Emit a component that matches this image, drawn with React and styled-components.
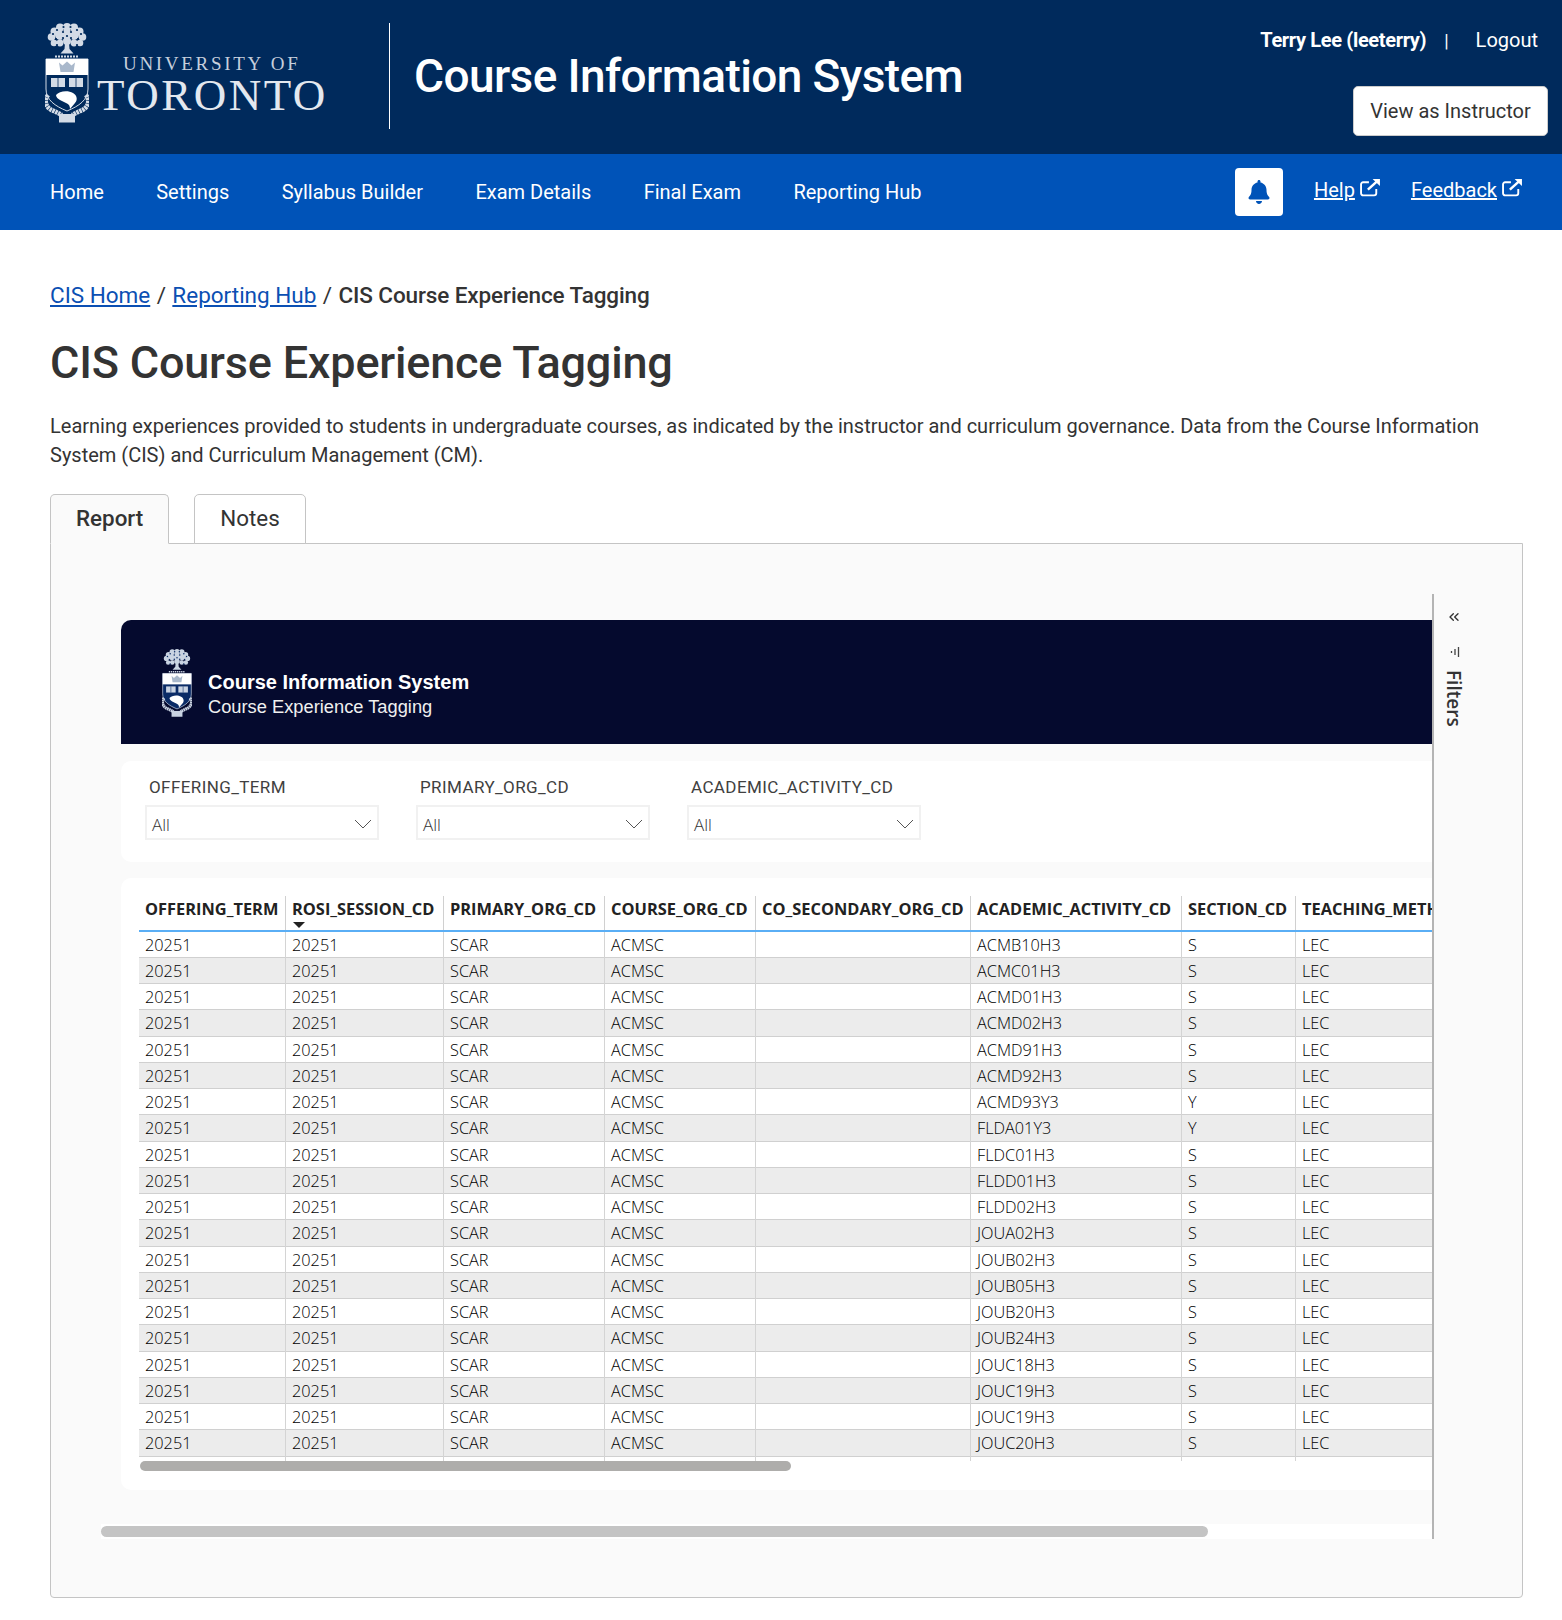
import React from 'react';
import styled, { createGlobalStyle } from 'styled-components';
import { FaBell } from 'react-icons/fa';
import { ChevronsLeft } from 'lucide-react';

const courses = [
  ['ACMB10H3', 'S'], ['ACMC01H3', 'S'], ['ACMD01H3', 'S'], ['ACMD02H3', 'S'],
  ['ACMD91H3', 'S'], ['ACMD92H3', 'S'], ['ACMD93Y3', 'Y'], ['FLDA01Y3', 'Y'],
  ['FLDC01H3', 'S'], ['FLDD01H3', 'S'], ['FLDD02H3', 'S'], ['JOUA02H3', 'S'],
  ['JOUB02H3', 'S'], ['JOUB05H3', 'S'], ['JOUB20H3', 'S'], ['JOUB24H3', 'S'],
  ['JOUC18H3', 'S'], ['JOUC19H3', 'S'], ['JOUC19H3', 'S'], ['JOUC20H3', 'S'],
];

const columns = [
  'OFFERING_TERM', 'ROSI_SESSION_CD', 'PRIMARY_ORG_CD', 'COURSE_ORG_CD',
  'CO_SECONDARY_ORG_CD', 'ACADEMIC_ACTIVITY_CD', 'SECTION_CD', 'TEACHING_METHOD_CD',
];

const navLinks = ['Home', 'Settings', 'Syllabus Builder', 'Exam Details', 'Final Exam', 'Reporting Hub'];
const slicers = ['OFFERING_TERM', 'PRIMARY_ORG_CD', 'ACADEMIC_ACTIVITY_CD'];

// leaf clumps of the tree on the crest
const treeBumps = [
  [22, 4, 4], [15, 4.500, 4], [29, 4.500, 4], [9.500, 8.500, 4], [34.500, 8.500, 4],
  [6.500, 14, 3.800], [37.500, 14, 3.800], [9, 20, 3.300], [35, 20, 3.300],
  [15, 12, 5], [22, 11, 5], [29, 12, 5], [15, 20, 3.400], [29, 20, 3.400], [22, 18, 4],
];
const treeDots = [
  [18.500, 4], [25.500, 4], [12, 7], [32, 7], [8, 11], [36, 11], [18, 9], [26, 9],
  [11, 16], [33, 16], [18, 15], [26, 15], [12, 22], [32, 22], [22, 13],
];

const Crest = ({ width, height, light, shield }) => (
  <svg width={width} height={height} viewBox="0 0 44 100" style={{ flex: 'none' }}>
    <g fill={light}>
      {treeBumps.map(([x, y, r]) => <circle key={`${x}-${y}`} cx={x} cy={y} r={r} />)}
    </g>
    <g fill={shield}>
      {treeDots.map(([x, y]) => <circle key={`${x}-${y}`} cx={x} cy={y} r="1.100" />)}
    </g>
    <path d="M20 20h4l.5 6 4 4.500h-13l4-4.500z" fill={light} />
    <path d="M10 33.500h24" stroke={light} strokeWidth="2" strokeDasharray="2 1" />
    <path d="M1 36h42v30c0 11-9 17-21 22C10 83 1 77 1 66z" fill={shield} stroke={light} strokeWidth="1" />
    <rect x="1" y="36" width="42" height="16" fill="#fff" />
    <path d="M14 39.500l3.500 3 4.500-4 4.500 4 3.500-3-1.500 9.500h-13z" fill="#a9b8cb" />
    <rect x="6" y="55" width="14" height="9" fill={light} />
    <rect x="24" y="55" width="14" height="9" fill={light} />
    <path d="M13 55v9M31 55v9" stroke={shield} strokeWidth=".8" />
    <path d="M11 72c3-4 12-5 17-2 4 2 5 7 2 10l-5 6c0-3-1-5-4-6l-6-3c-2-1-4-3-4-5z" fill="#fff" />
    <path d="M3 72C-2 79 2 86 9 88l8 4M41 72c5 7 1 14-6 16l-8 4" fill="none" stroke={light} strokeWidth="4.500" strokeDasharray="2.500 .6" />
    <rect x="14" y="91" width="16" height="8.500" fill={light} />
  </svg>
);

const ExternalIcon = () => (
  <ExternalSvg width="21" height="19" viewBox="0 0 20 18">
    <path d="M15.500 10.500v4a2 2 0 0 1-2 2H3a2 2 0 0 1-2-2V6a2 2 0 0 1 2-2h5.500" fill="none" stroke="currentColor" strokeWidth="1.800" />
    <path d="M7.500 11L17.500 2" fill="none" stroke="currentColor" strokeWidth="2.400" />
    <path d="M12 1h7v6.500z" fill="currentColor" />
  </ExternalSvg>
);

const App = () => {
  return (
    <>
      <GlobalStyle />
      <Banner>
        <Brand>
          <Crest width={44} height={100} light="#d3dbe6" shield="#002a5c" />
          <Wordmark>
            <WordTop>UNIVERSITY OF</WordTop>
            <WordMain>TORONTO</WordMain>
          </Wordmark>
        </Brand>
        <BannerRule />
        <SystemTitle>Course Information System</SystemTitle>
        <Account>
          <UserRow>
            <UserName>Terry Lee (leeterry)</UserName>
            <UserPipe>|</UserPipe>
            <UserLink>Logout</UserLink>
          </UserRow>
          <ViewButton>View as Instructor</ViewButton>
        </Account>
      </Banner>

      <NavBar>
        <NavList>
          {navLinks.map((link) => (
            <NavLink key={link}>{link}</NavLink>
          ))}
        </NavList>
        <NavTools>
          <BellButton><FaBell size={24} /></BellButton>
          <ToolLink><u>Help</u><ExternalIcon /></ToolLink>
          <ToolLink><u>Feedback</u><ExternalIcon /></ToolLink>
        </NavTools>
      </NavBar>

      <Main>
        <Breadcrumb>
          <a>CIS Home</a><CrumbSep>/</CrumbSep><a>Reporting Hub</a><CrumbSep>/</CrumbSep><strong>CIS Course Experience Tagging</strong>
        </Breadcrumb>
        <PageTitle>CIS Course Experience Tagging</PageTitle>
        <Intro>
          Learning experiences provided to students in undergraduate courses, as indicated by the instructor and
          curriculum governance. Data from the Course Information System (CIS) and Curriculum Management (CM).
        </Intro>
        <Tabs>
          <Tab active>Report</Tab>
          <Tab>Notes</Tab>
        </Tabs>
        <Panel>
          <Canvas>
            <Viewport>
              <Sheet>
                <ReportBand>
                  <BandCrest>
                    <Crest width={30} height={70} light="#c9d3e2" shield="#0a2b66" />
                  </BandCrest>
                  <BandText>
                    <BandTitle>Course Information System</BandTitle>
                    <BandSub>Course Experience Tagging</BandSub>
                  </BandText>
                </ReportBand>
                <SlicerCard>
                  {slicers.map((slicer) => (
                    <Slicer key={slicer}>
                      <SlicerLabel>{slicer}</SlicerLabel>
                      <SlicerBox>
                        All
                        <svg width="18" height="10" viewBox="0 0 18 10">
                          <path d="M1 1l8 8 8-8" fill="none" stroke="#555" strokeWidth="1" />
                        </svg>
                      </SlicerBox>
                    </Slicer>
                  ))}
                </SlicerCard>
                <TableCard>
                  <HeadRow>
                    {columns.map((col, i) => (
                      <HeadCell key={col}>
                        {col}
                        {i === 1 && <SortMark />}
                      </HeadCell>
                    ))}
                  </HeadRow>
                  {courses.map(([code, section], i) => (
                    <BodyRow key={i} shaded={i % 2 === 1}>
                      <BodyCell>20251</BodyCell>
                      <BodyCell>20251</BodyCell>
                      <BodyCell>SCAR</BodyCell>
                      <BodyCell>ACMSC</BodyCell>
                      <BodyCell />
                      <BodyCell>{code}</BodyCell>
                      <BodyCell>{section}</BodyCell>
                      <BodyCell>LEC</BodyCell>
                    </BodyRow>
                  ))}
                  <TailRow>
                    {columns.map((col) => <TailCell key={col} />)}
                  </TailRow>
                  <TableScroll />
                </TableCard>
              </Sheet>
            </Viewport>
            <PageScrollTrack>
              <PageScrollThumb />
            </PageScrollTrack>
          </Canvas>
          <FilterRail>
            <ChevronsLeft size={16} strokeWidth={2} color="#333" />
            <RailIcon width="12" height="12" viewBox="0 0 12 12">
              <path d="M10.500 1v10M7 3v6M3.500 5v2" stroke="#444" strokeWidth="1.300" fill="none" />
            </RailIcon>
            <RailText>Filters</RailText>
          </FilterRail>
        </Panel>
      </Main>
    </>
  );
};

const GlobalStyle = createGlobalStyle`
  * {
    box-sizing: border-box;
  }
  body {
    margin: 0;
    background: #fff;
    color: #333;
    font-family: Roboto, "Liberation Sans", sans-serif;
  }
`;

const Banner = styled.header`
  display: flex;
  align-items: center;
  height: 154px;
  padding-left: 45px;
  background: #002a5c;
  color: #fff;
`;

const Brand = styled.div`
  display: flex;
  align-items: flex-start;
  width: 344px;
  height: 100px;
  margin-top: -8px;
`;

const Wordmark = styled.div`
  display: flex;
  flex-direction: column;
  margin-left: 8px;
  font-family: "Liberation Serif", serif;
  color: #e3e8ef;
`;

const WordTop = styled.div`
  margin: 31px 0 0 26px;
  font-size: 19px;
  line-height: 19px;
  letter-spacing: 2.7px;
  white-space: nowrap;
  color: #c6cfdc;
`;

const WordMain = styled.div`
  font-size: 45px;
  line-height: 44px;
  letter-spacing: 2.500px;
  white-space: nowrap;
`;

const BannerRule = styled.div`
  width: 1px;
  height: 106px;
  margin-top: -2px;
  background: #fff;
`;

const SystemTitle = styled.h1`
  margin: -2px 0 0 24px;
  font-size: 46px;
  font-weight: 500;
  letter-spacing: -0.6px;
  white-space: nowrap;
`;

const Account = styled.div`
  display: flex;
  flex-direction: column;
  align-items: flex-end;
  align-self: flex-start;
  gap: 34px;
  margin-left: auto;
  padding: 28px 14px 0 0;
`;

const UserRow = styled.div`
  display: flex;
  align-items: center;
  height: 24px;
  padding-right: 10px;
  font-size: 20px;
`;

const UserName = styled.span`
  font-weight: 700;
  letter-spacing: -0.35px;
`;

const UserPipe = styled.span`
  margin: 0 27px 0 18px;
  font-size: 18px;
`;

const UserLink = styled.a``;

const ViewButton = styled.button`
  width: 195px;
  height: 50px;
  border: 1px solid #ccc;
  border-radius: 5px;
  background: #fff;
  color: #333;
  font-family: inherit;
  font-size: 20px;
`;

const NavBar = styled.nav`
  display: flex;
  align-items: center;
  height: 76px;
  padding: 0 39px 0 50px;
  background: #0053b8;
  color: #fff;
`;

const NavList = styled.div`
  display: flex;
  gap: 52.400px;
`;

const NavLink = styled.a`
  font-size: 20px;
  white-space: nowrap;
`;

const NavTools = styled.div`
  display: flex;
  align-items: center;
  gap: 30px;
  margin-left: auto;
`;

const BellButton = styled.div`
  display: flex;
  align-items: center;
  justify-content: center;
  width: 48px;
  height: 48px;
  margin-right: 1px;
  border-radius: 4px;
  background: #fff;
  color: #0053b8;
`;

const ToolLink = styled.a`
  display: flex;
  align-items: center;
  gap: 5px;
  margin-top: -4px;
  font-size: 20px;
  color: #fff;
`;

const ExternalSvg = styled.svg`
  margin-top: -5px;
`;

const Main = styled.main`
  padding: 0 39px 22px 50px;
`;

const Breadcrumb = styled.div`
  padding-top: 49px;
  font-size: 22.500px;
  line-height: 32px;
  a {
    color: #0b4fb3;
    text-decoration: underline;
  }
  strong {
    font-weight: 500;
    letter-spacing: -0.1px;
  }
`;

const CrumbSep = styled.span`
  margin: 0 6.400px;
`;

const PageTitle = styled.h2`
  margin: 24px 0 0;
  font-size: 45px;
  line-height: 56px;
  font-weight: 500;
  letter-spacing: -0.2px;
`;

const Intro = styled.p`
  margin: 21px 0 0;
  font-size: 20px;
  line-height: 29px;
`;

const Tabs = styled.div`
  display: flex;
  gap: 25px;
  margin-top: 24px;
`;

const Tab = styled.div`
  height: 50px;
  margin-bottom: -1px;
  padding: 0 25px;
  border: 1px solid #c4c4c4;
  border-bottom-color: ${(props) => (props.active ? '#fafafa' : '#c4c4c4')};
  border-radius: 5px 5px 0 0;
  background: ${(props) => (props.active ? '#fafafa' : '#fff')};
  position: relative;
  font-size: 22.400px;
  font-weight: ${(props) => (props.active ? 500 : 400)};
  line-height: 46px;
`;

const Panel = styled.div`
  display: flex;
  align-items: flex-start;
  height: 1055px;
  padding: 50px 0 0 50px;
  border: 1px solid #c4c4c4;
  border-radius: 0 0 4px 4px;
  background: #fafafa;
`;

const Canvas = styled.div`
  display: flex;
  flex-direction: column;
  justify-content: space-between;
  width: 1331px;
  height: 945px;
`;

const Viewport = styled.div`
  overflow: hidden;
`;

const Sheet = styled.div`
  width: 1500px;
  padding: 26px 0 0 20px;
`;

const ReportBand = styled.div`
  display: flex;
  align-items: center;
  gap: 16px;
  height: 124px;
  padding: 0 0 0 41px;
  border-radius: 10px 10px 0 0;
  background: #050a2e;
  color: #fff;
  font-family: "Liberation Sans", sans-serif;
`;

const BandCrest = styled.div`
  padding-top: 6px;
`;

const BandText = styled.div`
  display: flex;
  flex-direction: column;
  padding-top: 22px;
`;

const BandTitle = styled.div`
  font-size: 20px;
  font-weight: 700;
  line-height: 26px;
`;

const BandSub = styled.div`
  font-size: 18.300px;
  line-height: 23px;
  color: #f0f0f0;
`;

const SlicerCard = styled.div`
  display: flex;
  gap: 37px;
  height: 101px;
  margin-top: 17px;
  padding: 14px 0 0 24px;
  border-radius: 10px;
  background: #fff;
`;

const Slicer = styled.div`
  width: 234px;
`;

const SlicerLabel = styled.div`
  padding-left: 4px;
  font-size: 17px;
  line-height: 24px;
  letter-spacing: 0.4px;
  color: #404040;
`;

const SlicerBox = styled.div`
  display: flex;
  align-items: center;
  justify-content: space-between;
  height: 35px;
  margin-top: 6px;
  padding: 3px 5px 0 5px;
  border: 2px solid #f1f1f1;
  font-family: "Open Sans", sans-serif;
  font-size: 17px;
  font-weight: 300;
  color: #333;
`;

const TableCard = styled.div`
  height: 612px;
  margin-top: 16px;
  padding: 18px 0 0 18px;
  border-radius: 10px;
  background: #fff;
`;

const tableColumns = `grid-template-columns: 147px 158px 161px 151px 215px 211px 114px 190px;`;

const HeadRow = styled.div`
  display: grid;
  ${tableColumns}
  height: 35.500px;
  border-bottom: 2px solid #5aaef5;
`;

const HeadCell = styled.div`
  position: relative;
  padding: 2px 0 0 6px;
  border-right: 1px solid #d0d0d0;
  overflow: hidden;
  font-family: "Open Sans", sans-serif;
  font-size: 16.400px;
  font-weight: 700;
  line-height: 22px;
  white-space: nowrap;
  color: #222;
`;

const SortMark = styled.span`
  position: absolute;
  left: 7px;
  bottom: 2px;
  border-left: 6px solid transparent;
  border-right: 6px solid transparent;
  border-top: 6px solid #222;
`;

const BodyRow = styled.div`
  display: grid;
  ${tableColumns}
  height: 26.250px;
  border-bottom: 1px solid #d0d0d0;
  background: ${(props) => (props.shaded ? '#ececec' : '#fff')};
`;

const BodyCell = styled.div`
  padding-left: 6px;
  border-right: 1px solid #d4d4d4;
  font-family: "Open Sans", sans-serif;
  font-size: 16.300px;
  font-weight: 300;
  line-height: 26.500px;
  white-space: nowrap;
  color: #000;
`;

const TailRow = styled.div`
  display: grid;
  ${tableColumns}
  height: 4px;
`;

const TailCell = styled.div`
  border-right: 1px solid #d4d4d4;
`;

const TableScroll = styled.div`
  width: 651px;
  height: 10px;
  margin-left: 1px;
  border-radius: 5px;
  background: #aeadab;
`;

const PageScrollTrack = styled.div`
  padding: 2px 0;
  background: #fff;
`;

const PageScrollThumb = styled.div`
  width: 1107px;
  height: 11px;
  border-radius: 6px;
  background: #c4c4c4;
`;

const FilterRail = styled.div`
  display: flex;
  flex-direction: column;
  align-items: center;
  width: 44px;
  height: 945px;
  padding: 15px 2px 0 0;
  border-left: 2px solid #b4b4b4;
`;

const RailIcon = styled.svg`
  margin-top: 21px;
`;

const RailText = styled.div`
  margin-top: 12px;
  font-family: "Open Sans", sans-serif;
  font-size: 19px;
  font-weight: 600;
  line-height: 20px;
  color: #333;
  writing-mode: vertical-rl;
`;

export default App;
